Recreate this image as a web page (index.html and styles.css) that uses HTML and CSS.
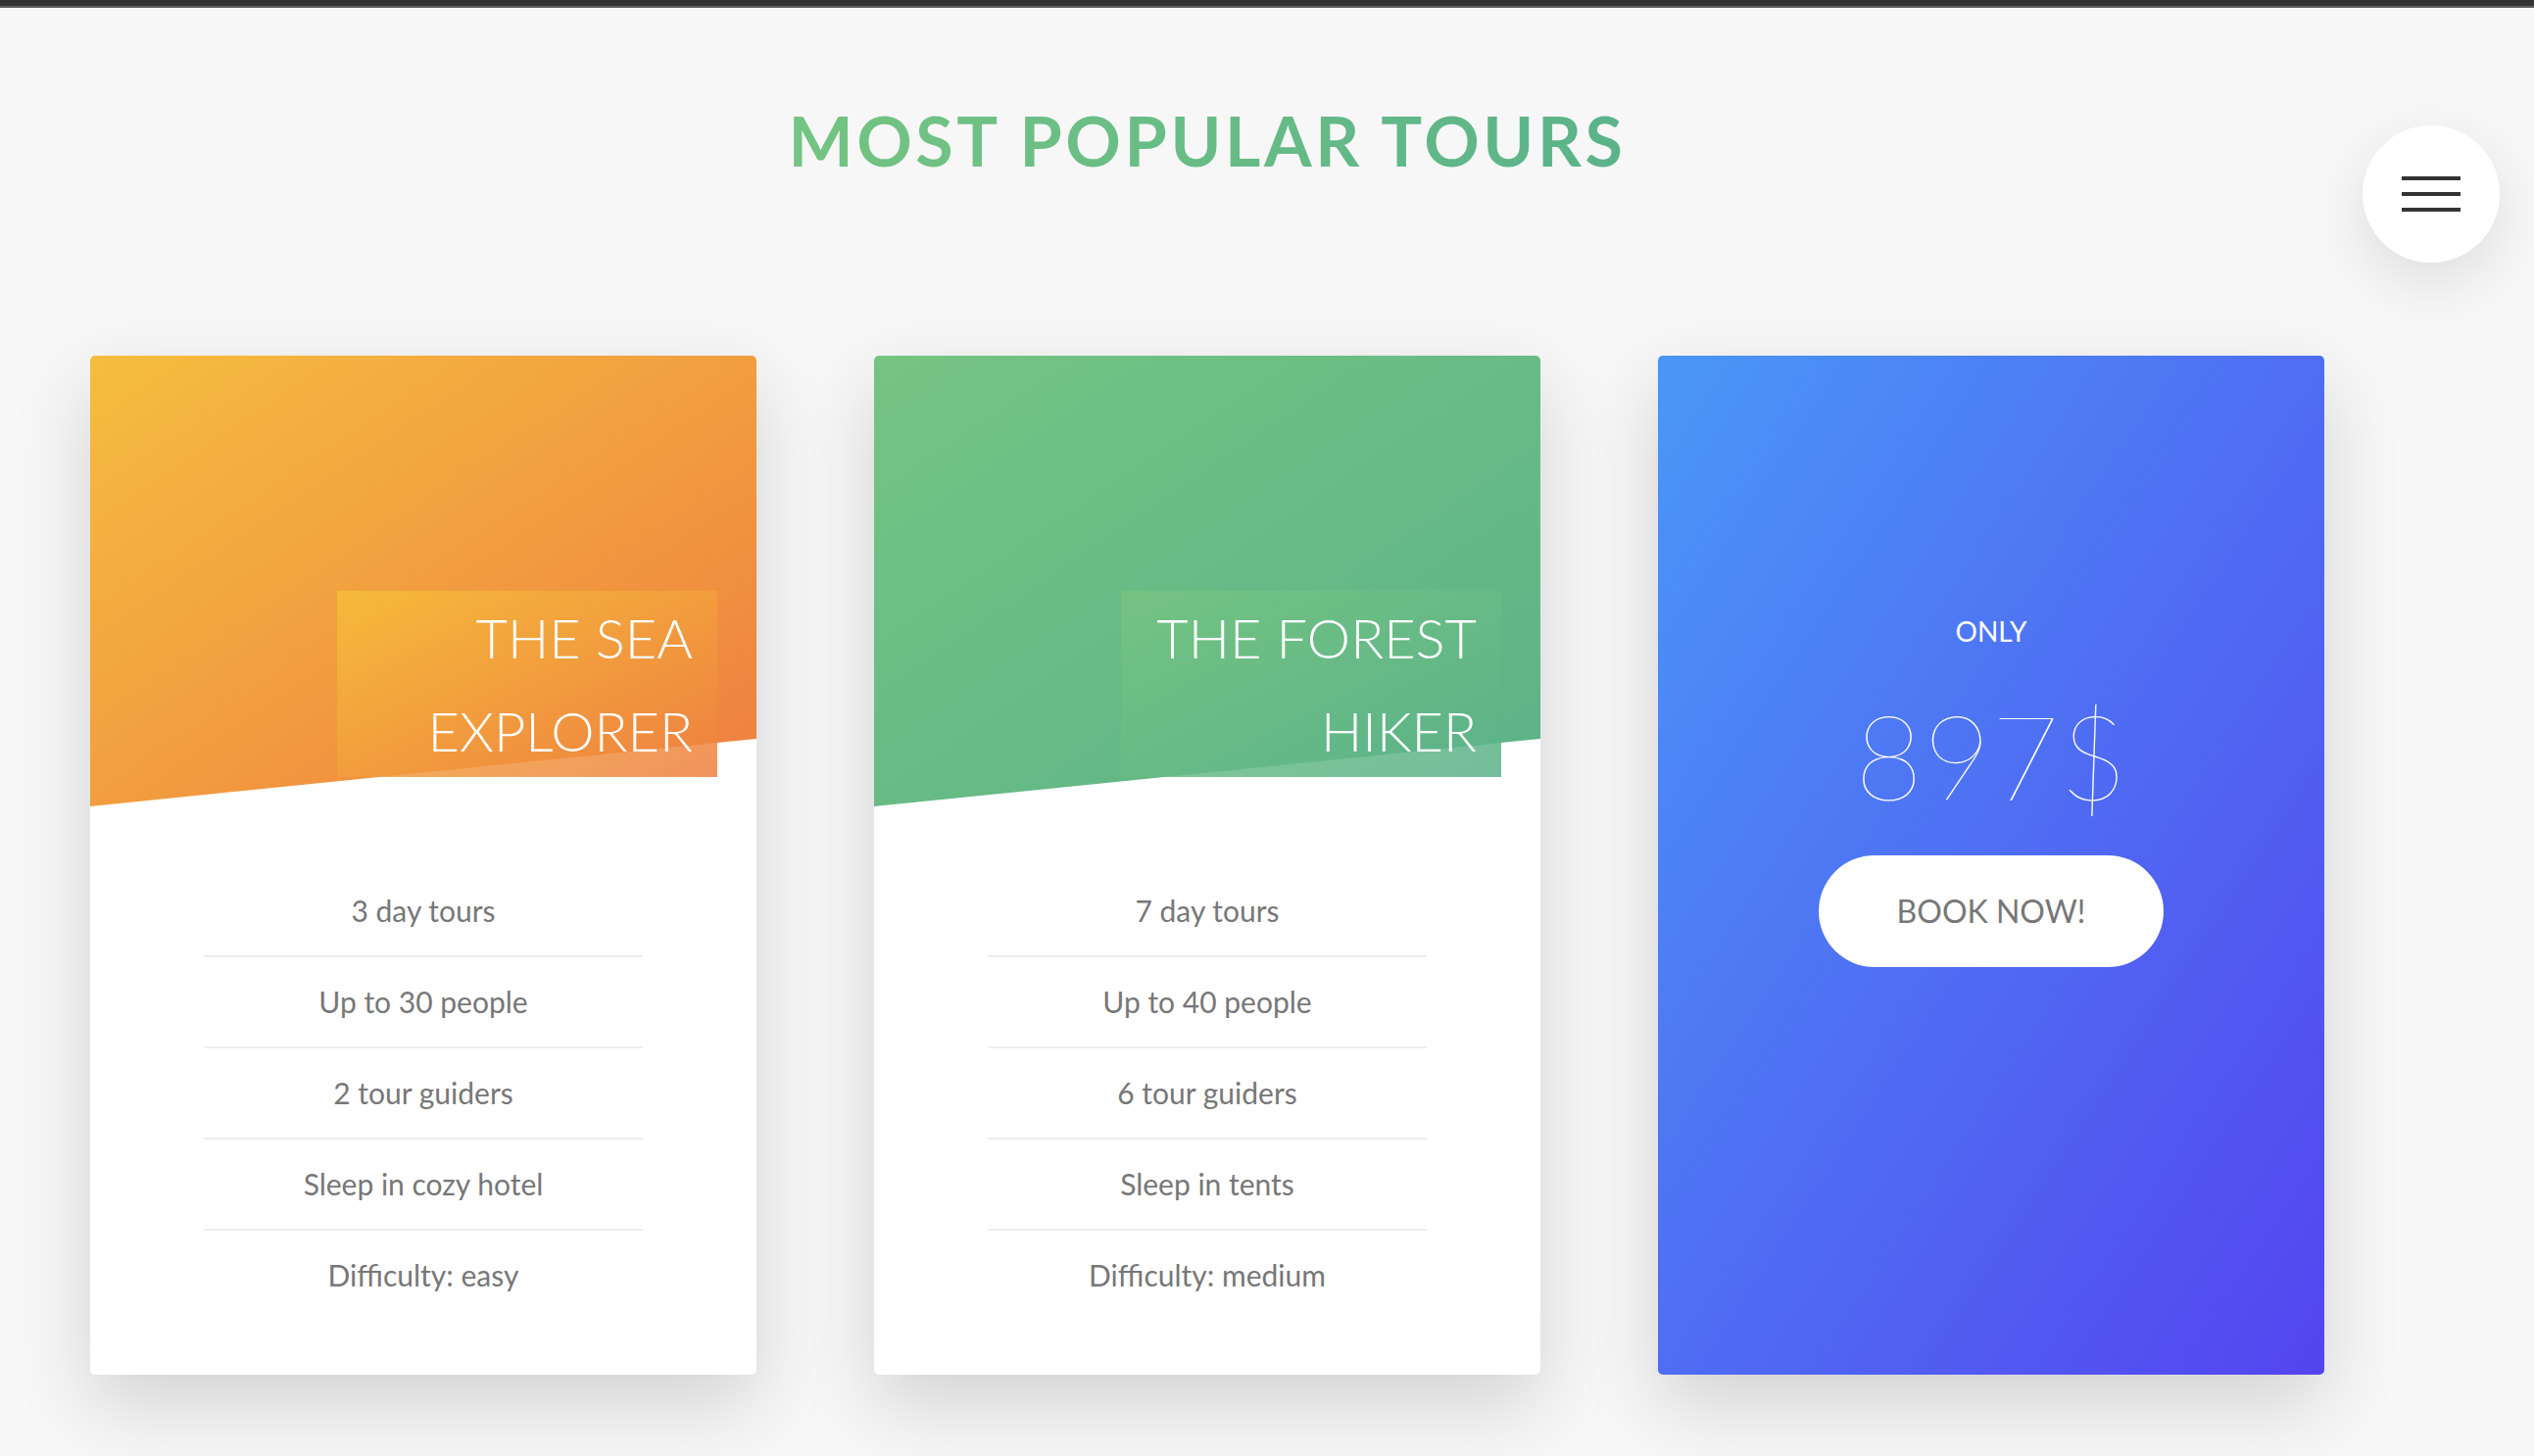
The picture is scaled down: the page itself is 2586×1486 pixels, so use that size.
FILE: index.html
```html
<!DOCTYPE html>
<html lang="en">
<head>
<meta charset="utf-8">
<title>Most popular tours</title>
<link rel="stylesheet" href="styles.css">
</head>
<body>
<div class="topbar"></div>
<button class="nav-btn" aria-label="Menu">
  <span class="nav-line"></span>
  <span class="nav-line"></span>
  <span class="nav-line"></span>
</button>
<section class="tours">
  <div class="title-wrap">
    <h2 class="title">Most popular tours</h2>
  </div>
  <div class="row">
    <div class="card">
      <div class="card-picture card-picture--1"></div>
      <h4 class="card-heading card-heading--1">The Sea<br>Explorer</h4>
      <div class="card-details">
        <ul class="card-list">
          <li>3 day tours</li>
          <li>Up to 30 people</li>
          <li>2 tour guiders</li>
          <li>Sleep in cozy hotel</li>
          <li>Difficulty: easy</li>
        </ul>
      </div>
    </div>
    <div class="card">
      <div class="card-picture card-picture--2"></div>
      <h4 class="card-heading card-heading--2">The Forest<br>Hiker</h4>
      <div class="card-details">
        <ul class="card-list">
          <li>7 day tours</li>
          <li>Up to 40 people</li>
          <li>6 tour guiders</li>
          <li>Sleep in tents</li>
          <li>Difficulty: medium</li>
        </ul>
      </div>
    </div>
    <div class="card card--back">
      <div class="cta">
        <p class="price-only">Only</p>
        <p class="price-value">897$</p>
        <a class="btn-white" href="#">Book now!</a>
      </div>
    </div>
  </div>
</section>
</body>
</html>
```

FILE: styles.css
```css
* {
  box-sizing: border-box;
}

html, body {
  margin: 0;
  padding: 0;
}

body {
  min-height: 100vh;
  background: #f7f7f7;
  font-family: Lato, "Open Sans", "Liberation Sans", sans-serif;
  color: #777;
  line-height: 1.7;
}

.topbar {
  height: 8px;
  background: #333;
  border-bottom: 2px solid #5e5e5e;
}

.nav-btn {
  position: fixed;
  top: 128px;
  right: 35px;
  width: 140px;
  height: 140px;
  border: none;
  border-radius: 50%;
  background: #fff;
  box-shadow: 0 20px 60px rgba(0, 0, 0, 0.1);
  display: flex;
  flex-direction: column;
  align-items: center;
  justify-content: center;
  gap: 12px;
  padding: 0;
  z-index: 10;
}

.nav-line {
  display: block;
  width: 60px;
  height: 4px;
  background: #333;
}

.tours {
  padding: 76px 122px 0 0;
}

.title-wrap {
  text-align: center;
  margin-bottom: 160px;
}

.title {
  display: inline-block;
  margin: 0;
  font-size: 70px;
  font-weight: 700;
  line-height: 119px;
  text-transform: uppercase;
  letter-spacing: 3.6px;
  background-image: linear-gradient(to right, #74c482, #5bb38a);
  -webkit-background-clip: text;
  background-clip: text;
  color: transparent;
}

.row {
  width: 2280px;
  margin: 0 auto;
  display: flex;
  gap: 120px;
}

.card {
  position: relative;
  width: 680px;
  height: 1040px;
  background: #fff;
  border-radius: 5px;
  overflow: hidden;
  box-shadow: 0 30px 80px rgba(0, 0, 0, 0.15);
}

.card-picture {
  height: 460px;
  clip-path: polygon(0 0, 100% 0, 100% 85%, 0 100%);
}

.card-picture--1 {
  background-image: linear-gradient(to right bottom, #f5bd3f, #ee7e40);
}

.card-picture--2 {
  background-image: linear-gradient(to right bottom, #75c483, #5bb288);
}

.card-heading {
  position: absolute;
  top: 240px;
  right: 40px;
  width: 388px;
  margin: 0;
  padding: 0 25px 0 0;
  font-size: 56px;
  font-weight: 300;
  line-height: 95.2px;
  text-transform: uppercase;
  text-align: right;
  color: #fff;
}

.card-heading--1 {
  background-image: linear-gradient(to right bottom, rgba(246, 190, 58, 0.85), rgba(238, 128, 64, 0.85));
}

.card-heading--2 {
  background-image: linear-gradient(to right bottom, rgba(118, 196, 130, 0.85), rgba(90, 178, 137, 0.85));
}

.card-details {
  padding: 61px 60px 60px;
}

.card-list {
  list-style: none;
  margin: 0 auto;
  padding: 0;
  width: 80%;
}

.card-list li {
  text-align: center;
  font-size: 30px;
  padding: 20px;
  color: #777;
}

.card-list li:not(:last-child) {
  border-bottom: 2px solid #eee;
}

.card--back {
  background-image: linear-gradient(to right bottom, #4a97f7, #5444ef);
  display: flex;
  align-items: center;
  justify-content: center;
}

.cta {
  text-align: center;
  color: #fff;
  padding-bottom: 158px;
}

.price-only {
  margin: 0;
  font-size: 28px;
  text-transform: uppercase;
  line-height: 47.6px;
}

.price-value {
  margin: 0;
  font-size: 120px;
  font-weight: 100;
  line-height: 204px;
}

.btn-white {
  display: inline-block;
  padding: 30px 80px;
  border-radius: 100px;
  background: #fff;
  color: #777;
  font-size: 32px;
  line-height: 54.4px;
  text-transform: uppercase;
  text-decoration: none;
}
```
